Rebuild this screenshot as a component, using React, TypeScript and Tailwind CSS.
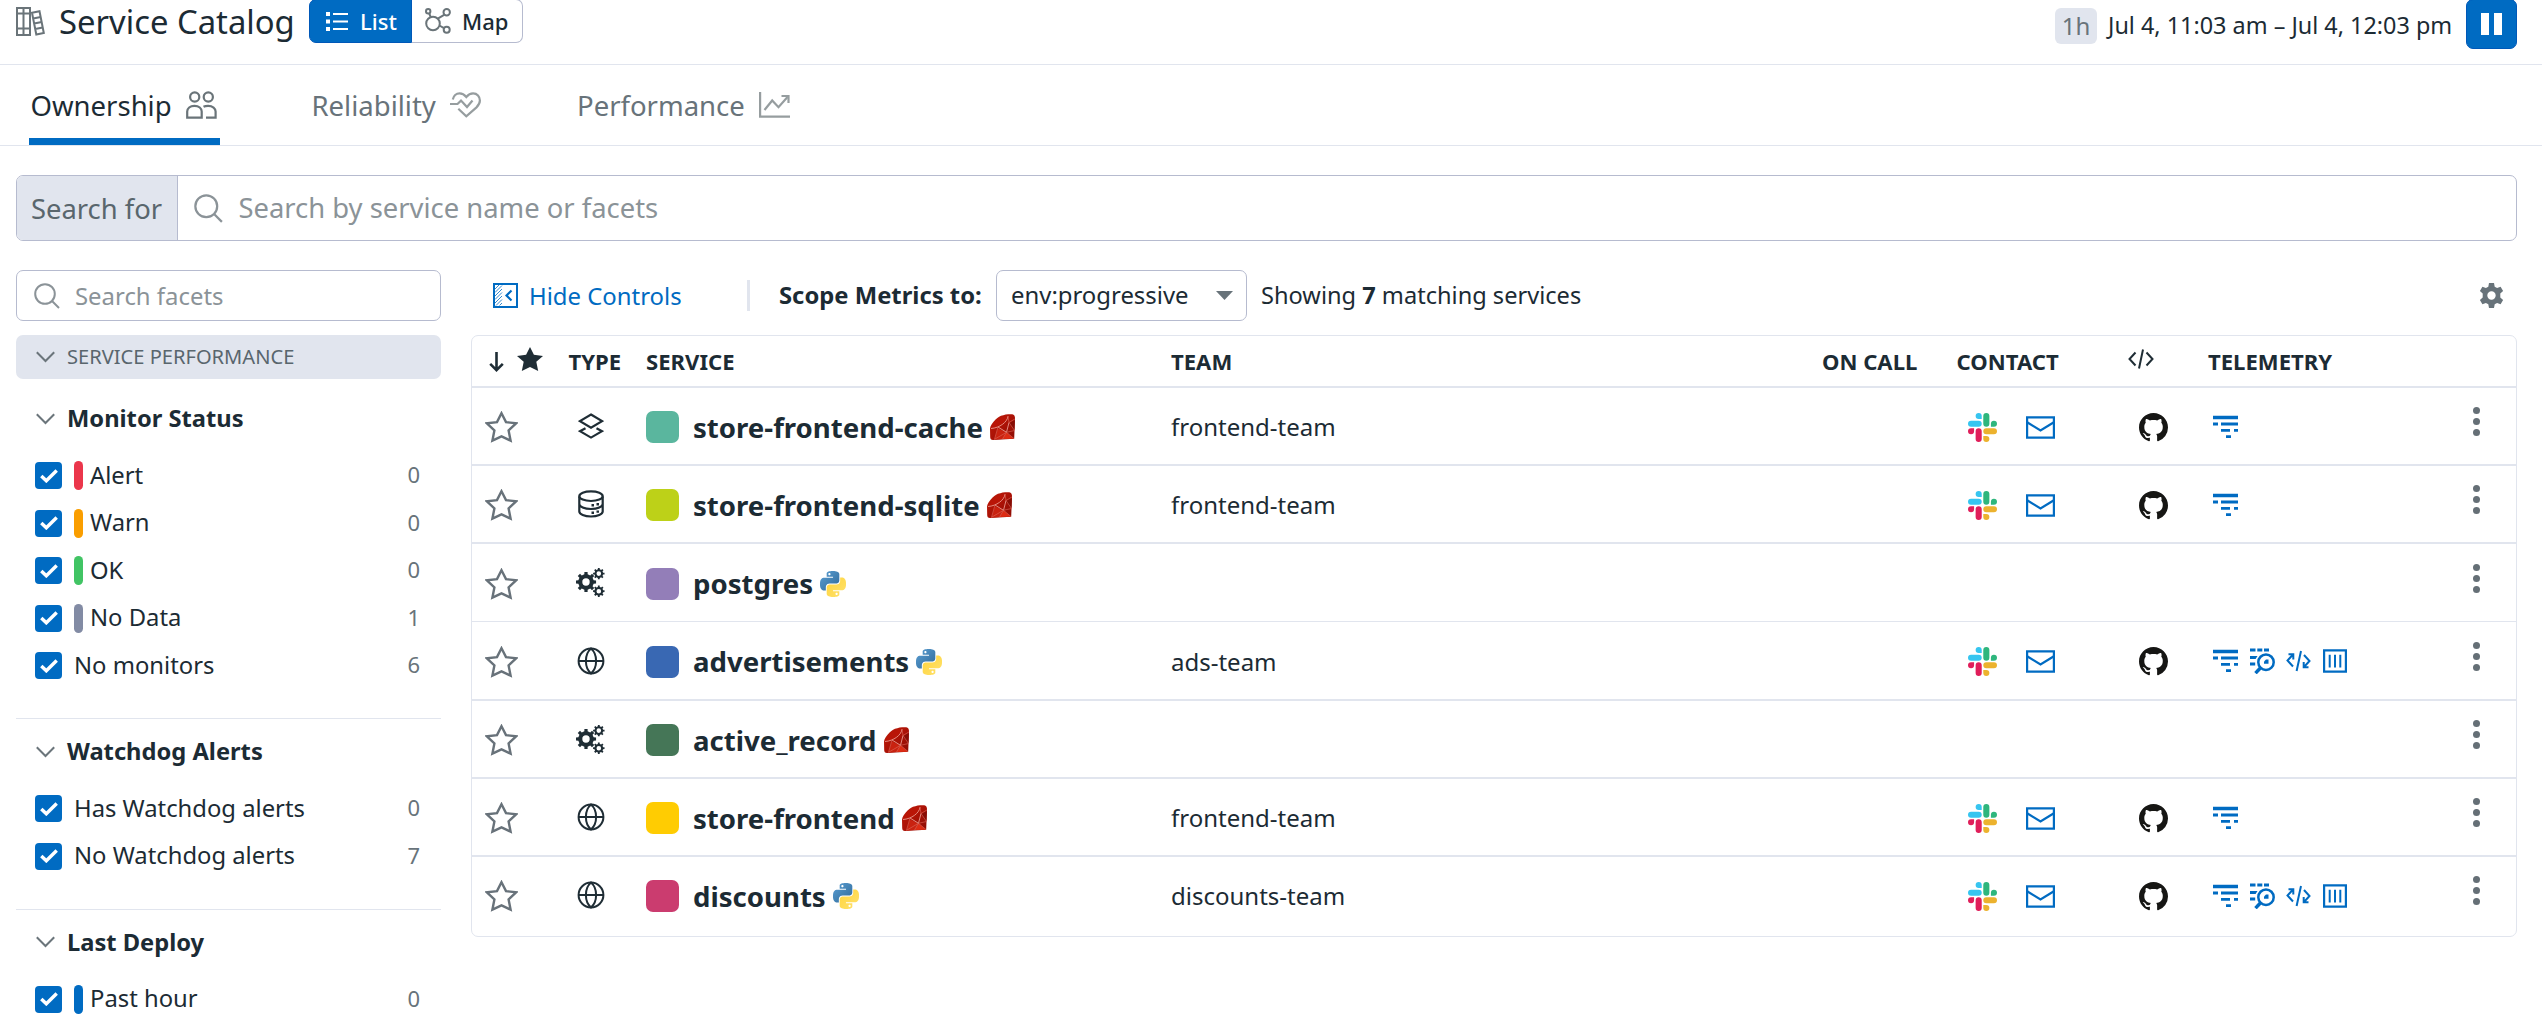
import type { ReactNode } from "react";

type Lang = "ruby" | "python";
type Kind = "cache" | "db" | "custom" | "web";

interface Service {
  name: string;
  kind: Kind;
  lang: Lang;
  swatch: string;
  row: string;
  team?: string;
  telemetry?: "basic" | "full";
}

const services: Service[] = [
  { name: "store-frontend-cache", kind: "cache", lang: "ruby", swatch: "bg-[#5ab69e]", row: "h-[78px] border-b-2", team: "frontend-team", telemetry: "basic" },
  { name: "store-frontend-sqlite", kind: "db", lang: "ruby", swatch: "bg-[#bdd118]", row: "h-[78px] border-b-2", team: "frontend-team", telemetry: "basic" },
  { name: "postgres", kind: "custom", lang: "python", swatch: "bg-[#937eb8]", row: "h-[78px] border-b" },
  { name: "advertisements", kind: "web", lang: "python", swatch: "bg-[#3968b3]", row: "h-[79px] border-b-2", team: "ads-team", telemetry: "full" },
  { name: "active_record", kind: "custom", lang: "ruby", swatch: "bg-[#457657]", row: "h-[78px] border-b-2" },
  { name: "store-frontend", kind: "web", lang: "ruby", swatch: "bg-[#ffcc02]", row: "h-[78px] border-b-2", team: "frontend-team", telemetry: "basic" },
  { name: "discounts", kind: "web", lang: "python", swatch: "bg-[#cb3c6f]", row: "h-[79px] pb-[3px]", team: "discounts-team", telemetry: "full" },
];

const COLS = "grid grid-cols-[96px_78px_525px_651px_134px_171px_81px_1fr_43px]";

function SearchIcon({ className }: { className: string }) {
  return (
    <svg viewBox="0 0 26 26" className={className} fill="none" stroke="currentColor" strokeWidth="2">
      <circle cx="11" cy="11" r="9.8" />
      <path d="M18 18l7 7" />
    </svg>
  );
}

function Chevron() {
  return (
    <svg viewBox="0 0 19 12" className="mr-[12px] h-[12px] w-[19px] shrink-0 text-[#6b757b]" fill="none" stroke="currentColor" strokeWidth="2">
      <path d="M.8 1.2l8.7 8.8 8.7-8.8" />
    </svg>
  );
}

function BooksIcon() {
  return (
    <svg viewBox="0 0 29 29" className="h-[29px] w-[29px] shrink-0" fill="none" stroke="#6a7479" strokeWidth="2">
      <path d="M1 1h13v27H1zM7.5 1v27M1 6.500h13M1 21.500h13" />
      <path d="M16 5.800l7.500-1.500L27.800 26l-7.500 1.500zM17.200 11.500l7.500-1.500M18.200 16.500l7.500-1.500M19.200 22l7.500-1.500" />
    </svg>
  );
}

function ListIcon() {
  return (
    <svg viewBox="0 0 22 19" className="h-[19px] w-[22px]" fill="currentColor">
      <path d="M0 0h4v4H0zM0 7.500h4v4H0zM0 15h4v4H0zM7 1h15v2H7zM7 8.500h15v2H7zM7 16h15v2H7z" />
    </svg>
  );
}

function MapIcon() {
  return (
    <svg viewBox="0 0 26 26" className="h-[26px] w-[26px]" fill="none" stroke="#6a7479" strokeWidth="2">
      <circle cx="8" cy="15.500" r="6.800" />
      <circle cx="3.200" cy="3.300" r="2.200" />
      <circle cx="21.700" cy="4.200" r="3.200" />
      <circle cx="21.700" cy="21.800" r="3" />
      <path d="M4.200 5.500l1.600 3.600M19.500 6.700l-6.700 4M14.400 17.500l4.600 2.600" />
    </svg>
  );
}

function PeopleIcon() {
  return (
    <svg viewBox="0 0 31 28" className="h-[28px] w-[31px]" fill="none" stroke="#6a7479" strokeWidth="2.2">
      <circle cx="8.700" cy="6" r="4.600" />
      <circle cx="22.300" cy="6" r="4.600" />
      <path d="M1.200 26.700V20.500c0-3 2.800-5.700 7.200-5.700 4.600 0 7.300 2.700 7.300 5.700v6.200z" />
      <path d="M17.500 15.700c1.300-.7 3-.9 4.600-.9 4.600 0 7.500 2.700 7.500 5.700v6.200H20" />
    </svg>
  );
}

function HeartIcon() {
  return (
    <svg viewBox="0 0 31 26" className="h-[26px] w-[31px]" fill="none" stroke="#969d9f" strokeWidth="2.2">
      <path d="M2.800 7.500C3.500 4 6.200 1.400 9.600 1.400c2.800 0 4.800 1.300 6.700 3.600 1.900-2.300 4-3.600 6.800-3.600 4 0 6.800 3.200 6.800 7.200 0 2.600-1.400 4.800-3.400 6.800L16.300 24.300l-8-7.600" />
      <path d="M0 12h7.500L11 8.600l6 6.400 5.500-6.500" />
    </svg>
  );
}

function TrendIcon() {
  return (
    <svg viewBox="0 0 31 26" className="h-[26px] w-[31px]" fill="none" stroke="#969d9f" strokeWidth="2.2">
      <path d="M1.100 0v24.700H31" />
      <path d="M5.500 18l7.700-9.500 6.300 6.700L28.500 5" />
      <path d="M22.500 4h7v7" />
    </svg>
  );
}

function StarIcon() {
  return (
    <svg viewBox="0 0 33 32" className="mt-[2px] h-[32px] w-[33px]" fill="none" stroke="#68727a" strokeWidth="2.4">
      <path d="M16.500 2.200l4.500 8.900 10.100 1.200-7.500 7.100 2 10.300-9.100-4.400-9.100 4.400 2-10.300-7.500-7.100L12 11.100z" />
    </svg>
  );
}

/** Outline of a gear with eight teeth and a round hole, centred on (cx, cy). */
function gearPath(cx: number, cy: number, outer: number, root: number, hole: number) {
  const teeth = 8;
  const step = (Math.PI * 2) / teeth;
  const points: string[] = [];
  for (let i = 0; i < teeth; i++) {
    const a = i * step;
    const corners: [number, number][] = [
      [a - step * 0.27, root],
      [a - step * 0.2, outer],
      [a + step * 0.2, outer],
      [a + step * 0.27, root],
    ];
    corners.forEach(([t, r]) => points.push(`${(cx + Math.cos(t) * r).toFixed(2)} ${(cy + Math.sin(t) * r).toFixed(2)}`));
  }
  return `M${points.join("L")}zM${cx - hole} ${cy}a${hole} ${hole} 0 1 0 ${hole * 2} 0a${hole} ${hole} 0 1 0 ${-hole * 2} 0z`;
}

function CogsIcon() {
  return (
    <svg viewBox="0 0 29 29" className="h-[29px] w-[29px]" fill="#1f2d35" fillRule="evenodd">
      <path d={gearPath(10, 14, 10.2, 7.8, 3.7)} />
      <path d={gearPath(22.8, 5.6, 5.8, 4.4, 2.3)} />
      <path d={gearPath(22.8, 23.2, 5.8, 4.4, 2.3)} />
    </svg>
  );
}

function KindIcon({ kind }: { kind: Kind }) {
  if (kind === "custom") return <CogsIcon />;
  const common = { fill: "none", stroke: "#1f2d35", strokeWidth: 2.2 };
  if (kind === "web")
    return (
      <svg viewBox="0 0 28 28" className="h-[28px] w-[28px]" {...common} strokeWidth={2}>
        <circle cx="14" cy="14" r="12.400" />
        <path d="M1.500 14h25" />
        <path d="M14 1.600c-3.500 3-5.100 7.500-5.100 12.400s1.600 9.400 5.100 12.400c3.500-3 5.100-7.500 5.100-12.400S17.500 4.600 14 1.600z" />
      </svg>
    );
  if (kind === "db")
    return (
      <svg viewBox="0 0 26 28" className="h-[28px] w-[26px]" {...common}>
        <ellipse cx="13" cy="6.200" rx="11.700" ry="4.800" />
        <path d="M1.300 6.500v15c0 2.800 5.200 5 11.700 5s11.700-2.200 11.700-5v-15M1.300 14c0 2.800 5.200 5 11.700 5s11.700-2.200 11.700-5" />
        <path d="M13.500 15.300h2.500M18.500 14.200h2.500M13.500 22.700h2.500M18.500 21.600h2.500" strokeWidth="2.4" />
      </svg>
    );
  return (
    <svg viewBox="0 0 26 26" className="-mt-px h-[26px] w-[26px]" {...common}>
      <path d="M13 1.500L24 8.100 13 14.700 2 8.100z" />
      <path d="M7.500 15.200L2 18.200l11 6.400 11-6.400-5.500-3" />
    </svg>
  );
}

function RubyIcon() {
  return (
    <svg viewBox="0 0 25 26" className="h-[26px] w-[25px]">
      <defs>
        <linearGradient id="ruby-body" x1="0" y1="0" x2="1" y2="1">
          <stop offset="0" stopColor="#c01c0a" />
          <stop offset=".5" stopColor="#ab1206" />
          <stop offset="1" stopColor="#8a0c04" />
        </linearGradient>
      </defs>
      <path d="M11 1.800C14.500.3 19 0 22.300.2 24.200.6 25 2 25 4l-.8 20.800L3 26C1 26 .2 24.800.2 23L0 14.500C1 9.500 6 4.300 11 1.800z" fill="url(#ruby-body)" />
      <path d="M4.500 25.500L8 14.500l8.500 3.800-4 6.700z" fill="#c92210" />
      <path d="M12.500 25l4-6.700L24 24.700z" fill="#dd2c14" />
      <path d="M19 9.500L24.900 6l-.4 10z" fill="#860d05" />
      <path d="M1 14.500C2.500 8.500 10 2 18 2.200 17.500 8 9.500 14 1 14.500z" fill="#b91507" />
      <path d="M1 14.500c8.500-.5 16.500-6.500 17-12.300M8 13l8.500 5.300L19 8.500" fill="none" stroke="#e9988d" strokeWidth=".9" />
      <path d="M18 2.200l1 6.300 5.800-3.500M19 8.500l5.500 8-8 1.800L24 24.500M16.500 18.300l-4 6.700M8 13L4.500 25.300l12-7" fill="none" stroke="#dd6a5c" strokeWidth=".6" />
    </svg>
  );
}

function PythonIcon() {
  return (
    <svg viewBox="0 0 24 24" className="h-[26px] w-[26px]">
      <defs>
        <linearGradient id="py-top" x1="0" y1="0" x2="1" y2="1">
          <stop offset="0" stopColor="#5a9fd4" />
          <stop offset="1" stopColor="#306998" />
        </linearGradient>
        <linearGradient id="py-bottom" x1="0" y1="0" x2="1" y2="1">
          <stop offset="0" stopColor="#ffd43b" />
          <stop offset="1" stopColor="#ffe26e" />
        </linearGradient>
      </defs>
      <path
        fill="url(#py-top)"
        d="M14.25.18l.9.2.73.26.59.3.45.32.34.34.25.34.16.33.1.3.04.26.02.2-.01.13V8.500l-.05.63-.13.55-.21.46-.26.38-.3.31-.33.25-.35.19-.35.14-.33.1-.3.07-.26.04-.21.02H8.770l-.69.05-.59.14-.5.22-.41.27-.33.32-.27.35-.2.36-.15.37-.1.35-.07.32-.04.27-.02.21v3.060H3.170l-.21-.03-.28-.07-.32-.12-.35-.18-.36-.26-.36-.36-.35-.46-.32-.59-.28-.73-.21-.88-.14-1.050-.05-1.230.06-1.220.16-1.040.24-.87.32-.71.36-.57.4-.44.42-.33.42-.24.4-.16.36-.1.32-.05.24-.01h.16l.06.01h8.160v-.83H6.180l-.01-2.750-.02-.37.05-.34.11-.31.17-.28.25-.26.31-.23.38-.2.44-.18.51-.15.58-.12.64-.1.71-.06.77-.04.84-.02 1.270.05zm-6.300 1.980l-.23.33-.08.41.08.41.23.34.33.22.41.09.41-.09.33-.22.23-.34.08-.41-.08-.41-.23-.33-.33-.22-.41-.09-.41.09z"
      />
      <path
        fill="url(#py-bottom)"
        d="M21.040 6.110l.28.06.32.12.35.18.36.27.36.35.35.47.32.59.28.73.21.88.14 1.040.05 1.230-.06 1.230-.16 1.040-.24.86-.32.71-.36.57-.4.45-.42.33-.42.24-.4.16-.36.09-.32.05-.24.02-.16-.01h-8.220v.82h5.840l.01 2.760.02.36-.05.34-.11.31-.17.29-.25.25-.31.24-.38.2-.44.17-.51.15-.58.13-.64.09-.71.07-.77.04-.84.01-1.270-.04-1.070-.14-.9-.2-.73-.25-.59-.3-.45-.33-.34-.34-.25-.34-.16-.33-.1-.3-.04-.25-.02-.2.01-.13v-5.340l.05-.64.13-.54.21-.46.26-.38.3-.32.33-.24.35-.2.35-.14.33-.1.3-.06.26-.04.21-.02.13-.01h5.840l.69-.05.59-.14.5-.21.41-.28.33-.32.27-.35.2-.36.15-.36.1-.35.07-.32.04-.28.02-.21V6.070h2.090l.14.01zm-6.470 14.250l-.23.33-.08.41.08.41.23.33.33.23.41.08.41-.08.33-.23.23-.33.08-.41-.08-.41-.23-.33-.33-.23-.41-.08-.41.08z"
      />
    </svg>
  );
}

function SlackIcon() {
  return (
    <svg viewBox="0 0 24 24" className="h-[29px] w-[29px]">
      <path fill="#e01e5a" d="M5.042 15.165a2.528 2.528 0 0 1-2.520 2.523A2.528 2.528 0 0 1 0 15.165a2.527 2.527 0 0 1 2.522-2.520h2.520v2.520zM6.313 15.165a2.527 2.527 0 0 1 2.521-2.520 2.527 2.527 0 0 1 2.521 2.520v6.313A2.528 2.528 0 0 1 8.834 24a2.528 2.528 0 0 1-2.521-2.522v-6.313z" />
      <path fill="#36c5f0" d="M8.834 5.042a2.528 2.528 0 0 1-2.521-2.520A2.528 2.528 0 0 1 8.834 0a2.528 2.528 0 0 1 2.521 2.522v2.520H8.834zM8.834 6.313a2.528 2.528 0 0 1 2.521 2.521 2.528 2.528 0 0 1-2.521 2.521H2.522A2.528 2.528 0 0 1 0 8.834a2.528 2.528 0 0 1 2.522-2.521h6.312z" />
      <path fill="#2eb67d" d="M18.956 8.834a2.528 2.528 0 0 1 2.522-2.521A2.528 2.528 0 0 1 24 8.834a2.528 2.528 0 0 1-2.522 2.521h-2.522V8.834zM17.688 8.834a2.528 2.528 0 0 1-2.523 2.521 2.527 2.527 0 0 1-2.520-2.521V2.522A2.527 2.527 0 0 1 15.165 0a2.528 2.528 0 0 1 2.523 2.522v6.312z" />
      <path fill="#ecb22e" d="M15.165 18.956a2.528 2.528 0 0 1 2.523 2.522A2.528 2.528 0 0 1 15.165 24a2.527 2.527 0 0 1-2.520-2.522v-2.522h2.520zM15.165 17.688a2.527 2.527 0 0 1-2.520-2.523 2.526 2.526 0 0 1 2.520-2.520h6.313A2.527 2.527 0 0 1 24 15.165a2.528 2.528 0 0 1-2.522 2.523h-6.313z" />
    </svg>
  );
}

function MailIcon() {
  return (
    <svg viewBox="0 0 29 23" className="h-[23px] w-[29px]" fill="none" stroke="#006bc2" strokeWidth="2.2">
      <path d="M1.100 1.300h26.800v20.400H1.100z" />
      <path d="M1.500 6.500l13 8 13-8" />
    </svg>
  );
}

function GithubIcon() {
  return (
    <svg viewBox="0 0 16 16" className="h-[29px] w-[29px]" fill="#161614">
      <path d="M8 0C3.580 0 0 3.580 0 8c0 3.540 2.290 6.530 5.470 7.590.4.07.55-.17.55-.38 0-.19-.01-.82-.01-1.490-2.010.37-2.530-.49-2.690-.94-.09-.23-.48-.94-.82-1.130-.28-.15-.68-.52-.01-.53.63-.01 1.080.58 1.230.82.72 1.210 1.870.87 2.330.66.07-.52.28-.87.51-1.070-1.780-.2-3.640-.89-3.640-3.950 0-.87.31-1.590.82-2.150-.08-.2-.36-1.020.08-2.120 0 0 .67-.21 2.200.82.64-.18 1.320-.27 2-.27.68 0 1.360.09 2 .27 1.530-1.040 2.200-.82 2.200-.82.44 1.100.16 1.920.08 2.120.51.56.82 1.270.82 2.150 0 3.070-1.870 3.750-3.650 3.950.29.25.54.73.54 1.480 0 1.070-.01 1.930-.01 2.200 0 .21.15.46.55.38A8.013 8.013 0 0016 8c0-4.420-3.580-8-8-8z" />
    </svg>
  );
}

function TraceIcon() {
  return (
    <svg viewBox="0 0 25 24" className="h-[24px] w-[25px]" fill="#006bc2">
      <path d="M0 .8h25v3.400H0zM0 7.500h5v3H0zM8 7.500h17v3H8zM8 14h9v2.800H8zM21 14h4v2.800h-4zM13 20.300h5V23h-5z" />
    </svg>
  );
}

function LogSearchIcon() {
  return (
    <svg viewBox="0 0 25 26" className="h-[26px] w-[25px]" fill="#006bc2">
      <path d="M0 .5h5.500v3H0zM7.300.5h5v3h-5zM14 .5h5v3h-5zM0 8h7.500L5.600 10.900H0zM0 14.500h5.200v3H0z" />
      <circle cx="16" cy="14.200" r="7.700" fill="none" stroke="#006bc2" strokeWidth="2.5" />
      <path d="M10.800 19.500l-5.300 5.700" stroke="#006bc2" strokeWidth="3.4" />
      <path d="M14 15.700v-2.200l2-2h2.500v4.200z" />
    </svg>
  );
}

function CodeSyncIcon() {
  return (
    <svg viewBox="0 0 25 22" className="h-[22px] w-[25px]" fill="none" stroke="#006bc2" strokeWidth="2">
      <path d="M7 16.500L1.500 10.500 7 4.500M2.500 4.300h4.800v5.200M15 1L10.600 21M18 5l5.500 6-5.500 6M22.500 17.300h-4.800v-5.200" />
    </svg>
  );
}

function ContainerIcon() {
  return (
    <svg viewBox="0 0 24 24" className="h-[24px] w-[24px]" fill="none" stroke="#006bc2">
      <path d="M1.100 1.300h21.800v21.400H1.100z" strokeWidth="2.2" />
      <path d="M6.700 5.800v12.700M12 5.800v12.700M17.300 5.800v12.700" strokeWidth="2" />
    </svg>
  );
}

function Kebab() {
  return (
    <svg viewBox="0 0 7 29" className="h-[29px] w-[7px]" fill="#656f76">
      <circle cx="3.500" cy="3.500" r="3.500" />
      <circle cx="3.500" cy="14.500" r="3.500" />
      <circle cx="3.500" cy="25.500" r="3.500" />
    </svg>
  );
}

function Tab({ label, icon, active, className }: { label: string; icon: ReactNode; active?: boolean; className: string }) {
  return (
    <div className={`flex h-[80px] items-center justify-between border-b-[7px] pt-[6px] ${active ? "border-[#006bc2] text-[#1c2b34]" : "border-transparent text-[#68737a]"} ${className}`}>
      <span className="pt-[2px]">{label}</span>
      {icon}
    </div>
  );
}

function Facet({ label, count, bar }: { label: string; count: number; bar?: string }) {
  return (
    <div className="flex h-[47.5px] items-center pr-[21px] pl-[19px]">
      <div className="mr-[12px] flex h-[27px] w-[27px] items-center justify-center rounded-[4px] bg-[#006bc2]">
        <svg viewBox="0 0 18 14" className="h-[14px] w-[18px]" fill="none" stroke="white" strokeWidth="3.4">
          <path d="M1.300 7l5 4.800L16.700 1.500" />
        </svg>
      </div>
      {bar && <div className={`mr-[7px] h-[29px] w-[9px] rounded-full ${bar}`} />}
      <span className="flex-1 text-[23.8px]">{label}</span>
      <span className="-mt-[2px] text-[22px] text-[#68737a]">{count}</span>
    </div>
  );
}

function FacetGroup({ title, children, last }: { title: string; children: ReactNode; last?: boolean }) {
  return (
    <div className={last ? "" : "border-b border-[#e1e5ee] pb-[28.5px]"}>
      <div className="flex h-[66px] items-center pb-[1px] pl-5 font-bold">
        <Chevron />
        <span className="pt-[1px] text-[23.7px]">{title}</span>
      </div>
      {children}
    </div>
  );
}

function ServiceRow({ s }: { s: Service }) {
  return (
    <div className={`${COLS} ${s.row} items-center border-[#e1e5ee]`}>
      <div className="pl-[13px]">
        <StarIcon />
      </div>
      <div className="flex w-[45px] justify-center">
        <KindIcon kind={s.kind} />
      </div>
      <div className="flex items-center pt-[3px]">
        <div className={`mr-[14px] h-[32px] w-[33px] rounded-[7px] ${s.swatch}`} />
        <span className="mr-[7px] text-[27.6px] font-bold">{s.name}</span>
        {s.lang === "ruby" ? <RubyIcon /> : <PythonIcon />}
      </div>
      <div className="pt-[2px] text-[24px]">{s.team}</div>
      <div />
      <div className="flex items-center gap-[29px] pt-[2px] pl-[12px]">
        {s.telemetry && (
          <>
            <SlackIcon />
            <MailIcon />
          </>
        )}
      </div>
      <div className="pt-[2px] pl-[12px]">{s.telemetry && <GithubIcon />}</div>
      <div className="flex items-center gap-[11.7px] pt-[1px] pl-[5px]">
        {s.telemetry && <TraceIcon />}
        {s.telemetry === "full" && (
          <>
            <LogSearchIcon />
            <CodeSyncIcon />
            <ContainerIcon />
          </>
        )}
      </div>
      <div className="pb-[9px]">
        <Kebab />
      </div>
    </div>
  );
}

export default function App() {
  return (
    <div className="h-[1024px] w-full overflow-hidden bg-white font-['Noto_Sans',sans-serif] text-[23.9px] whitespace-nowrap text-[#1c2b34]">
      <header className="flex h-[65px] items-start justify-between border-b border-[#e1e5ee] pr-[25px] pl-4">
        <div className="flex h-[43px] items-center">
          <BooksIcon />
          <h1 className="ml-[14px] w-[250px] text-[32.8px]">Service Catalog</h1>
          <div className="-mt-px flex h-[44px] w-[214px] text-[22px] font-medium">
            <div className="flex w-[103px] items-center rounded-l-[7px] border border-[#0058b8] bg-[#006bc2] pl-[16px] text-white">
              <ListIcon />
              <span className="ml-[12px] pt-px">List</span>
            </div>
            <div className="flex flex-1 items-center rounded-r-[7px] border border-l-0 border-[#b6bbcf] pl-[13px]">
              <MapIcon />
              <span className="ml-[11px] pt-px">Map</span>
            </div>
          </div>
        </div>
        <div className="flex items-start">
          <div className="mt-[8px] flex h-[36px] w-[42px] items-center justify-center rounded-[6px] bg-[#e1e5ee] text-[24px] text-[#68737a]">1h</div>
          <div className="mt-[8px] ml-[11px] flex h-[36px] w-[358px] items-center text-[23.4px]">Jul 4, 11:03 am – Jul 4, 12:03 pm</div>
          <div className="-mt-px flex h-[50px] w-[51px] items-center justify-center gap-[5px] rounded-[7px] border border-[#0058b8] bg-[#006bc2]">
            <div className="h-[22px] w-[8px] bg-white" />
            <div className="h-[22px] w-[8px] bg-white" />
          </div>
        </div>
      </header>

      <nav className="flex h-[81px] border-b border-[#e1e5ee] pl-[29px] text-[27.5px]">
        <Tab label="Ownership" active icon={<PeopleIcon />} className="w-[191px] pr-[3px] pl-[1.5px]" />
        <Tab label="Reliability" icon={<HeartIcon />} className="ml-[91.5px] w-[169.5px]" />
        <Tab label="Performance" icon={<TrendIcon />} className="ml-[96px] w-[213px]" />
      </nav>

      <div className="mt-[29px] mr-[25px] ml-4 flex h-[66px] overflow-hidden rounded-[7px] border border-[#b6bbcf] text-[27.4px]">
        <div className="flex w-[161px] items-center border-r border-[#b6bbcf] bg-[#e1e5ee] pt-[2px] pl-[14px] text-[#59666d]">Search for</div>
        <SearchIcon className="mt-[18px] ml-[16px] h-[29px] w-[29px] text-[#8b9398]" />
        <span className="ml-[15.5px] flex items-center text-[#8b9398]">Search by service name or facets</span>
      </div>

      <div className="mt-[29px] flex pr-[25px] pl-4">
        <aside className="w-[425px] shrink-0">
          <div className="flex h-[51px] items-center rounded-[7px] border border-[#b6bbcf] pl-[17px] text-[#8b9398]">
            <SearchIcon className="h-[26px] w-[26px]" />
            <span className="ml-[15px]">Search facets</span>
          </div>
          <div className="mt-[14px] mb-[7px] flex h-[44px] items-center rounded-[7px] bg-[#e1e5ee] pl-5 text-[20.1px] text-[#59666d]">
            <Chevron />
            SERVICE PERFORMANCE
          </div>
          <FacetGroup title="Monitor Status">
            <Facet label="Alert" count={0} bar="bg-[#eb364b]" />
            <Facet label="Warn" count={0} bar="bg-[#fa9e00]" />
            <Facet label="OK" count={0} bar="bg-[#41c464]" />
            <Facet label="No Data" count={1} bar="bg-[#828ba4]" />
            <Facet label="No monitors" count={6} />
          </FacetGroup>
          <FacetGroup title="Watchdog Alerts">
            <Facet label="Has Watchdog alerts" count={0} />
            <Facet label="No Watchdog alerts" count={7} />
          </FacetGroup>
          <FacetGroup title="Last Deploy" last>
            <Facet label="Past hour" count={0} bar="bg-[#006bc2]" />
          </FacetGroup>
        </aside>

        <main className="ml-[30px] flex-1">
          <div className="flex h-[51px] items-center pl-[22px]">
            <svg viewBox="0 0 25 25" className="mr-[11px] h-[25px] w-[25px]" fill="none" stroke="#006bc2">
              <path d="M1 1h23v23H1z" strokeWidth="2" />
              <path d="M2 6l4-4M2 9.500L9 2.500M2 13l7-7M2 16.500l7-7M2 20l7-7M3 22.500l6-6M6.500 22.500L9 20" strokeWidth=".8" />
              <path d="M18.500 7.500l-5 5 5 5" strokeWidth="2.2" />
            </svg>
            <span className="w-[218px]">
              <span className="text-[#006bc2]">Hide Controls</span>
            </span>
            <div className="mr-[29px] h-[31px] w-[3px] bg-[#e1e5ee]" />
            <span className="w-[217px] text-[23.8px] font-bold">Scope Metrics to:</span>
            <div className="flex h-[51px] w-[251px] items-center justify-between rounded-[7px] border border-[#b6bbcf] pr-[13px] pb-[1px] pl-[14px] text-[23.9px]">
              env:progressive
              <svg viewBox="0 0 17 9" className="h-[9px] w-[17px]" fill="#68737a">
                <path d="M0 0h17L8.500 9z" />
              </svg>
            </div>
            <span className="ml-[14px] flex-1 text-[23.6px]">
              Showing <b>7</b> matching services
            </span>
            <svg viewBox="0 0 25 25" className="mr-[13px] h-[25px] w-[25px]" fill="#68737a">
              <path
                fillRule="evenodd"
                d="M10 0h5l.7 3.700 2.400 1.400 3.500-1.300 2.500 4.300-2.800 2.500v3.800l2.800 2.500-2.500 4.300-3.500-1.300-2.400 1.400L15 25h-5l-.7-3.700-2.400-1.400-3.500 1.300-2.500-4.300 2.800-2.500v-3.800L.9 8.100l2.500-4.300 3.500 1.300 2.400-1.400zM12.500 8.300a4.200 4.200 0 1 0 0 8.400 4.200 4.200 0 0 0 0-8.400z"
              />
            </svg>
          </div>

          <div className="mt-[14px] rounded-[7px] border border-[#e1e5ee]">
            <div className={`${COLS} h-[52px] items-center border-b-2 border-[#e1e5ee] pt-[2px] text-[22.1px] font-bold`}>
              <div className="flex items-center pb-[3px] pl-[17px]">
                <svg viewBox="0 0 15 20" className="mt-[2px] mr-[13px] h-[20px] w-[15px]" fill="none" stroke="#1f2d35" strokeWidth="2.6">
                  <path d="M7.500 0v18M1.200 11.800l6.300 6.300 6.300-6.300" />
                </svg>
                <svg viewBox="0 0 26 24" className="mb-[3px] h-[24px] w-[26px]" fill="#1f2d35">
                  <path d="M13 0l3.900 7.700 9.100 1.200-6.700 5.900L21.200 24 13 19.900 4.800 24l1.900-9.200L0 8.900l9.100-1.200z" />
                </svg>
              </div>
              <div className="pl-[.5px]">TYPE</div>
              <div>SERVICE</div>
              <div>TEAM</div>
              <div>ON CALL</div>
              <div className="pl-[.5px]">CONTACT</div>
              <svg viewBox="0 0 26 20" className="mb-[7px] ml-px h-[20px] w-[26px]" fill="none" stroke="#1f2d35" strokeWidth="2">
                <path d="M7.500 3.500L1.500 10l6 6.500M18.500 3.500l6 6.500-6 6.500M15 .5L11 19.500" />
              </svg>
              <div>TELEMETRY</div>
            </div>
            {services.map((s) => (
              <ServiceRow key={s.name} s={s} />
            ))}
          </div>
        </main>
      </div>
    </div>
  );
}
